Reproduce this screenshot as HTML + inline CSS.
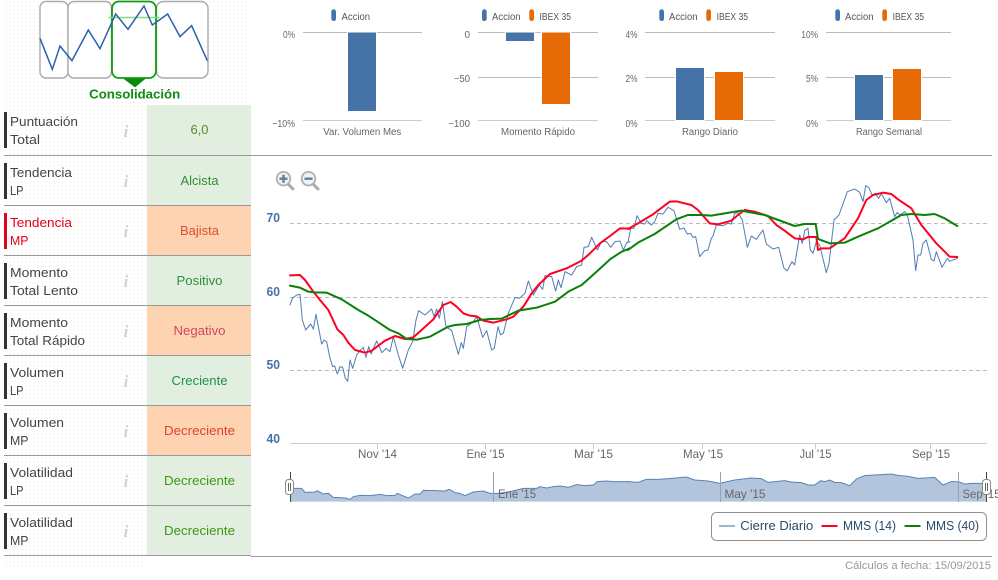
<!DOCTYPE html>
<html lang="es"><head><meta charset="utf-8"><title>Análisis</title>
<style>
html,body{margin:0;padding:0;background:#fff;width:998px;height:580px;overflow:hidden}
svg{display:block}
text{font-family:"Liberation Sans",sans-serif}
.lb{font-size:13px;fill:#444}
.v{font-size:13px;text-anchor:middle}
.i{font-family:"Liberation Serif",serif;font-size:17px;font-weight:bold;font-style:italic;fill:#d2d2d2;text-anchor:middle}
.s{font-size:10px;fill:#555}
.a{font-size:10px;fill:#666;text-anchor:end}
.c{font-size:10px;fill:#666;text-anchor:middle}
.y{font-size:12.5px;font-weight:bold;fill:#4572a7}
.x{font-size:12px;fill:#666;text-anchor:middle}
.n{font-size:12px;fill:#666}
.l{font-size:12.5px;fill:#274b6d}
.g{stroke:#bbb;stroke-width:1}
.ax{stroke:#c0d0e0;stroke-width:1}
.b{fill:#4572a7;stroke:#fff;stroke-width:1}
.o{fill:#e66a05;stroke:#fff;stroke-width:1}
.mb{fill:#4572a7}.mo{fill:#e66a05}
.row{stroke:#999;stroke-width:1}
</style></head><body>
<svg width="998" height="580" viewBox="0 0 998 580" xmlns="http://www.w3.org/2000/svg">
<defs><pattern id="d" width="4" height="4" patternUnits="userSpaceOnUse"><rect x="1" y="1" width="2" height="2" fill="#f9f9f9"/></pattern></defs>
<rect width="998" height="580" fill="#fff"/>
<rect x="4" y="0" width="246" height="105" fill="url(#d)"/>
<rect x="4" y="105" width="143" height="450" fill="url(#d)"/>
<rect x="4" y="557" width="142" height="12" fill="url(#d)"/>

<!-- logo -->
<rect x="40" y="1.5" width="28" height="76.5" rx="6" fill="#fff" stroke="#aaa" stroke-width="1.4"/>
<rect x="68" y="1.5" width="43.5" height="76.5" rx="6" fill="#fff" stroke="#aaa" stroke-width="1.4"/>
<rect x="156.5" y="1.5" width="51.5" height="76.5" rx="7" fill="#fff" stroke="#aaa" stroke-width="1.4"/>
<rect x="112" y="1.5" width="44" height="76.5" rx="7" fill="#fff" stroke="#129a12" stroke-width="1.8"/>
<path d="M108.5 17.5H159.5" stroke="#80dc80" stroke-width="1.6" fill="none"/>
<g transform="scale(.3333)"><path d="M120 115L157 208L180 138L216 182L265 90L300 146L347 42L384 88L432 18L457 75L503 42L540 110L575 77L622 182" fill="none" stroke="#2a62ae" stroke-width="4.5"/>
<path d="M370 236H437L405 262Z" fill="#0a8a0a"/></g>
<text x="134.7" y="98.5" text-anchor="middle" font-size="13" font-weight="bold" fill="#118a11" textLength="91" lengthAdjust="spacingAndGlyphs">Consolidación</text>

<!-- cells -->
<rect x="147" y="105" width="104" height="100.5" fill="#e2efe0"/>
<rect x="147" y="205.5" width="104" height="50" fill="#fdd3b2"/>
<rect x="147" y="255.5" width="104" height="50" fill="#e2efe0"/>
<rect x="147" y="305.5" width="104" height="50" fill="#fdd3b2"/>
<rect x="147" y="355.5" width="104" height="50" fill="#e2efe0"/>
<rect x="147" y="405.5" width="104" height="50" fill="#fdd3b2"/>
<rect x="147" y="455.5" width="104" height="100" fill="#e2efe0"/>

<!-- row lines -->
<path class="row" d="M4 155.5H992M4 205.5H251M4 255.5H251M4 305.5H251M4 355.5H251M4 405.5H251M4 455.5H251M4 505.5H251M4 555.5H251M251 556.5H992" fill="none"/>

<!-- bars -->
<g fill="#333">
<rect x="4" y="112" width="3" height="36"/><rect x="4" y="163" width="3" height="36"/>
<rect x="4" y="213" width="3" height="36" fill="#e2001a"/><rect x="4" y="263" width="3" height="36"/>
<rect x="4" y="313" width="3" height="36"/><rect x="4" y="363" width="3" height="36"/>
<rect x="4" y="413" width="3" height="36"/><rect x="4" y="463" width="3" height="36"/>
<rect x="4" y="513" width="3" height="36"/>
</g>

<text class="lb" x="10" y="126" textLength="68" lengthAdjust="spacingAndGlyphs">Puntuación</text><text class="lb" x="10" y="144" textLength="30" lengthAdjust="spacingAndGlyphs">Total</text>
<text class="lb" x="10" y="177" textLength="62" lengthAdjust="spacingAndGlyphs">Tendencia</text><text class="lb" x="10" y="195" textLength="13.5" lengthAdjust="spacingAndGlyphs">LP</text>
<text class="lb" x="10" y="227" textLength="62" lengthAdjust="spacingAndGlyphs" style="fill:#e2001a">Tendencia</text><text class="lb" x="10" y="245" textLength="18.5" lengthAdjust="spacingAndGlyphs" style="fill:#e2001a">MP</text>
<text class="lb" x="10" y="277" textLength="58" lengthAdjust="spacingAndGlyphs">Momento</text><text class="lb" x="10" y="295" textLength="68" lengthAdjust="spacingAndGlyphs">Total Lento</text>
<text class="lb" x="10" y="327" textLength="58" lengthAdjust="spacingAndGlyphs">Momento</text><text class="lb" x="10" y="345" textLength="75" lengthAdjust="spacingAndGlyphs">Total Rápido</text>
<text class="lb" x="10" y="377" textLength="54" lengthAdjust="spacingAndGlyphs">Volumen</text><text class="lb" x="10" y="395" textLength="13.5" lengthAdjust="spacingAndGlyphs">LP</text>
<text class="lb" x="10" y="427" textLength="54" lengthAdjust="spacingAndGlyphs">Volumen</text><text class="lb" x="10" y="445" textLength="18.5" lengthAdjust="spacingAndGlyphs">MP</text>
<text class="lb" x="10" y="477" textLength="63" lengthAdjust="spacingAndGlyphs">Volatilidad</text><text class="lb" x="10" y="495" textLength="13.5" lengthAdjust="spacingAndGlyphs">LP</text>
<text class="lb" x="10" y="527" textLength="63" lengthAdjust="spacingAndGlyphs">Volatilidad</text><text class="lb" x="10" y="545" textLength="18.5" lengthAdjust="spacingAndGlyphs">MP</text>

<text class="i" x="126" y="137">i</text><text class="i" x="126" y="187">i</text><text class="i" x="126" y="237">i</text>
<text class="i" x="126" y="287">i</text><text class="i" x="126" y="337">i</text><text class="i" x="126" y="387">i</text>
<text class="i" x="126" y="437">i</text><text class="i" x="126" y="487">i</text><text class="i" x="126" y="537">i</text>

<text class="v" x="199.5" y="134" textLength="18" lengthAdjust="spacingAndGlyphs" fill="#5a8a20">6,0</text>
<text class="v" x="199.5" y="185" textLength="38" lengthAdjust="spacingAndGlyphs" fill="#2e8f2e">Alcista</text>
<text class="v" x="199.5" y="235" textLength="39" lengthAdjust="spacingAndGlyphs" fill="#d9512c">Bajista</text>
<text class="v" x="199.5" y="285" textLength="46" lengthAdjust="spacingAndGlyphs" fill="#2f8f3a">Positivo</text>
<text class="v" x="199.5" y="335" textLength="52" lengthAdjust="spacingAndGlyphs" fill="#d0485a">Negativo</text>
<text class="v" x="199.5" y="385" textLength="56" lengthAdjust="spacingAndGlyphs" fill="#1f8f4f">Creciente</text>
<text class="v" x="199.5" y="435" textLength="71" lengthAdjust="spacingAndGlyphs" fill="#e0402b">Decreciente</text>
<text class="v" x="199.5" y="485" textLength="71" lengthAdjust="spacingAndGlyphs" fill="#3a9a10">Decreciente</text>
<text class="v" x="199.5" y="535" textLength="71" lengthAdjust="spacingAndGlyphs" fill="#3a9a10">Decreciente</text>

<!-- bar chart 1 -->
<rect class="mb" x="331.3" y="9.3" width="4.7" height="11.7" rx="2.3"/><text class="s" x="341.5" y="20" textLength="28.5" lengthAdjust="spacingAndGlyphs">Accion</text>
<path class="g" d="M303 32.5H422"/><path class="ax" d="M303 120.5H422"/>
<text class="a" x="295" y="38" textLength="12" lengthAdjust="spacingAndGlyphs">0%</text><text class="a" x="295" y="127" textLength="22.7" lengthAdjust="spacingAndGlyphs">−10%</text>
<rect class="b" x="347.5" y="32" width="29" height="79.5"/>
<text class="c" x="362.3" y="135" textLength="78" lengthAdjust="spacingAndGlyphs">Var. Volumen Mes</text>

<!-- bar chart 2 -->
<rect class="mb" x="482" y="9.3" width="4.7" height="11.7" rx="2.3"/><text class="s" x="492" y="20" textLength="28.5" lengthAdjust="spacingAndGlyphs">Accion</text>
<rect class="mo" x="529.3" y="9.3" width="4.7" height="11.7" rx="2.3"/><text class="s" x="539.5" y="20" textLength="31.5" lengthAdjust="spacingAndGlyphs">IBEX 35</text>
<path class="g" d="M478 32.5H598M478 77.5H598"/><path class="ax" d="M478 120.5H598"/>
<text class="a" x="470" y="38" textLength="5.5" lengthAdjust="spacingAndGlyphs">0</text><text class="a" x="470" y="82" textLength="16" lengthAdjust="spacingAndGlyphs">−50</text><text class="a" x="470" y="127" textLength="21.7" lengthAdjust="spacingAndGlyphs">−100</text>
<rect class="b" x="505.5" y="32" width="29" height="9.5"/><rect class="o" x="541.5" y="32" width="29" height="72.5"/>
<text class="c" x="538" y="135" textLength="74" lengthAdjust="spacingAndGlyphs">Momento Rápido</text>

<!-- bar chart 3 -->
<rect class="mb" x="659.3" y="9.3" width="4.7" height="11.7" rx="2.3"/><text class="s" x="669" y="20" textLength="28.5" lengthAdjust="spacingAndGlyphs">Accion</text>
<rect class="mo" x="706.3" y="9.3" width="4.7" height="11.7" rx="2.3"/><text class="s" x="716.6" y="20" textLength="31.5" lengthAdjust="spacingAndGlyphs">IBEX 35</text>
<path class="g" d="M645 32.5H775M645 77.5H775"/><path class="ax" d="M645 120.5H775"/>
<text class="a" x="637.5" y="38" textLength="12" lengthAdjust="spacingAndGlyphs">4%</text><text class="a" x="637.5" y="82" textLength="12" lengthAdjust="spacingAndGlyphs">2%</text><text class="a" x="637.5" y="127" textLength="12" lengthAdjust="spacingAndGlyphs">0%</text>
<rect class="b" x="675.5" y="67.5" width="29" height="53"/><rect class="o" x="714.5" y="71.5" width="29" height="49"/>
<text class="c" x="710" y="135" textLength="56" lengthAdjust="spacingAndGlyphs">Rango Diario</text>

<!-- bar chart 4 -->
<rect class="mb" x="835.3" y="9.3" width="4.7" height="11.7" rx="2.3"/><text class="s" x="845" y="20" textLength="28.5" lengthAdjust="spacingAndGlyphs">Accion</text>
<rect class="mo" x="882.3" y="9.3" width="4.7" height="11.7" rx="2.3"/><text class="s" x="892.6" y="20" textLength="31.5" lengthAdjust="spacingAndGlyphs">IBEX 35</text>
<path class="g" d="M826 32.5H951M826 77.5H951"/><path class="ax" d="M826 120.5H951"/>
<text class="a" x="818" y="38" textLength="16.7" lengthAdjust="spacingAndGlyphs">10%</text><text class="a" x="818" y="82" textLength="12" lengthAdjust="spacingAndGlyphs">5%</text><text class="a" x="818" y="127" textLength="12" lengthAdjust="spacingAndGlyphs">0%</text>
<rect class="b" x="854.5" y="74.5" width="29" height="46"/><rect class="o" x="892.5" y="68.5" width="29" height="52"/>
<text class="c" x="889" y="135" textLength="66" lengthAdjust="spacingAndGlyphs">Rango Semanal</text>

<!-- zoom icons -->
<g>
<path d="M288 184L293 189" stroke="#aaa" stroke-width="3" stroke-linecap="round"/>
<circle cx="283.5" cy="178.7" r="6.8" fill="#f2f2f2" stroke="#b0b0b0" stroke-width="1.8"/>
<path d="M279.5 178.7H287.5M283.5 174.7V182.7" stroke="#5c7f9f" stroke-width="2.4"/>
<path d="M313 184L318 189" stroke="#aaa" stroke-width="3" stroke-linecap="round"/>
<circle cx="308.5" cy="178.7" r="6.8" fill="#f2f2f2" stroke="#b0b0b0" stroke-width="1.8"/>
<path d="M304.5 178.7H312.5" stroke="#5c7f9f" stroke-width="2.4"/>
</g>

<!-- main chart -->
<path d="M290 223.5H987M290 297.5H987M290 370.5H987" stroke="#bbb" stroke-dasharray="4 3" fill="none"/>
<path class="ax" d="M290 443.5H987M377.5 443V449M485.5 443V449M593.5 443V449M702.5 443V449M815.5 443V449M930.5 443V449" fill="none"/>
<text class="y" x="266.5" y="222" textLength="13.5" lengthAdjust="spacingAndGlyphs">70</text><text class="y" x="266.5" y="296" textLength="13.5" lengthAdjust="spacingAndGlyphs">60</text><text class="y" x="266.5" y="369" textLength="13.5" lengthAdjust="spacingAndGlyphs">50</text><text class="y" x="266.5" y="443" textLength="13.5" lengthAdjust="spacingAndGlyphs">40</text>
<text class="x" x="377.5" y="458" textLength="39" lengthAdjust="spacingAndGlyphs">Nov '14</text><text class="x" x="485.5" y="458" textLength="38" lengthAdjust="spacingAndGlyphs">Ene '15</text><text class="x" x="593.5" y="458" textLength="39" lengthAdjust="spacingAndGlyphs">Mar '15</text><text class="x" x="703" y="458" textLength="40" lengthAdjust="spacingAndGlyphs">May '15</text><text class="x" x="815.5" y="458" textLength="32" lengthAdjust="spacingAndGlyphs">Jul '15</text><text class="x" x="931" y="458" textLength="38" lengthAdjust="spacingAndGlyphs">Sep '15</text>

<g fill="none" stroke-linejoin="round" stroke-linecap="round">
<g transform="translate(260 160) scale(.33333)">
<path stroke="#4f7cb2" stroke-width="3" d="M90 435L97 415L110 405L120 403L127 480L137 510L152 492L160 507L168 463L185 552L192 540L200 545L210 595L218 620L224 618L232 642L240 620L248 622L256 655L263 664L270 600L278 625L290 585L300 572L310 562L318 592L326 560L333 582L350 543L366 578L378 565L390 575L400 530L415 585L428 625L445 570L458 545L468 480L476 452L495 465L515 447L522 470L530 447L538 475L547 425L558 500L575 512L595 583L604 548L610 565L620 500L640 485L650 470L668 532L680 512L695 570L703 565L714 500L722 525L730 520L745 460L765 412L778 415L795 400L805 363L820 405L838 375L848 388L855 347L875 350L887 393L895 360L903 383L915 335L935 345L950 320L965 315L972 262L985 260L995 232L1012 270L1025 245L1040 245L1052 262L1065 245L1080 243L1090 270L1100 248L1110 245"/>
</g>
<g transform="translate(628 160) scale(.33333)">
<path stroke="#4f7cb2" stroke-width="3" d="M0 248L8 205L18 205L27 167L40 190L50 192L57 182L70 195L80 185L90 160L105 162L120 142L138 152L155 208L168 204L178 222L188 220L195 232L203 230L215 290L230 272L240 270L250 235L255 228L265 195L285 197L300 190L310 192L320 160L330 158L343 180L358 262L370 228L385 238L405 210L415 252L435 267L452 262L468 325L478 332L492 305L500 315L515 225L523 250L530 212L540 205L547 270L555 280L565 245L575 255L595 338L603 310L618 180L633 165L658 95L680 87L695 97L705 125L713 77L722 82L732 105L742 100L752 115L760 100L775 128L785 115L800 170L808 157L815 165L830 155L838 165L855 240L863 332L870 285L878 285L885 250L895 240L910 298L918 303L925 275L942 322L958 295L965 304L988 295"/>
</g>
<g transform="translate(260 160) scale(.33333)">
<path stroke="#ff0021" stroke-width="6" d="M90 346L120 345L135 360L160 395L180 420L205 450L232 508L250 525L265 548L285 570L315 578L335 572L375 542L405 528L435 537L460 532L490 505L520 478L550 435L572 426L590 440L610 460L630 467L650 469L670 482L700 488L740 478L760 470L790 440L815 400L835 375L870 342L920 325L965 302L990 280L1020 250L1050 228L1080 205L1110 206"/>
<path stroke="#0a800a" stroke-width="6" d="M90 377L120 383L145 395L165 397L200 398L245 418L295 450L325 467L390 510L415 520L440 537L470 539L510 530L565 500L585 495L620 492L660 480L690 477L725 476L775 452L830 443L885 425L925 395L965 375L1010 335L1050 298L1085 275L1110 265"/>
</g>
<g transform="translate(628 160) scale(.33333)">
<path stroke="#ff0021" stroke-width="6" d="M0 207L30 190L75 163L125 125L145 124L190 135L210 150L245 190L270 193L310 182L330 165L350 150L380 155L420 168L445 195L470 212L500 235L525 238L540 231L565 231L570 270L580 265L605 265L650 235L690 175L715 120L735 105L765 98L790 102L810 118L850 145L880 195L925 250L965 290L988 291"/>
<path stroke="#0a800a" stroke-width="6" d="M0 270L30 248L80 222L145 178L180 165L220 165L250 167L290 160L340 152L410 165L500 198L530 192L563 192L570 237L605 250L650 248L690 230L750 205L820 165L850 162L890 165L920 162L950 175L988 198"/>
</g>
</g>

<!-- navigator -->
<g transform="translate(260 430) scale(.33333)">
<path fill="#b3c5dc" stroke="none" d="M92 215V175H125L135 187L165 186L172 182L190 192L205 190L220 202L240 203L255 204L270 208L280 200L300 196L330 197L360 193L380 197L405 196L412 190L430 198L445 204L465 192L480 192L490 181L530 182L555 183L568 178L585 188L600 190L615 197L640 186L670 183L690 190L715 190L750 185L790 175L830 175L840 170L860 174L880 170L900 168L925 172L950 164L975 167L1000 165L1012 155L1040 153L1060 155L1110 155V215Z"/>
<path fill="none" stroke="#5a82b4" stroke-width="3" d="M92 175H125L135 187L165 186L172 182L190 192L205 190L220 202L240 203L255 204L270 208L280 200L300 196L330 197L360 193L380 197L405 196L412 190L430 198L445 204L465 192L480 192L490 181L530 182L555 183L568 178L585 188L600 190L615 197L640 186L670 183L690 190L715 190L750 185L790 175L830 175L840 170L860 174L880 170L900 168L925 172L950 164L975 167L1000 165L1012 155L1040 153L1060 155L1110 155"/>
</g>
<g transform="translate(628 430) scale(.33333)">
<path fill="#b3c5dc" stroke="none" d="M0 215V155L30 157L55 148L90 148L130 145L175 141L200 150L240 153L275 160L320 150L370 144L400 146L420 157L470 152L490 156L520 158L540 165L560 165L578 152L590 155L605 150L620 157L640 158L665 167L685 147L710 137L770 133L790 132L810 136L840 139L870 145L920 142L945 165L970 155L990 155L1010 162L1030 160L1075 160V215Z"/>
<path fill="none" stroke="#5a82b4" stroke-width="3" d="M0 155L30 157L55 148L90 148L130 145L175 141L200 150L240 153L275 160L320 150L370 144L400 146L420 157L470 152L490 156L520 158L540 165L560 165L578 152L590 155L605 150L620 157L640 158L665 167L685 147L710 137L770 133L790 132L810 136L840 139L870 145L920 142L945 165L970 155L990 155L1010 162L1030 160L1075 160"/>
</g>
<path d="M493.5 472V502M720.5 472V502M958.5 472V502" stroke="#9aa3ad" fill="none"/>
<text class="n" x="498" y="498" textLength="38" lengthAdjust="spacingAndGlyphs">Ene '15</text>
<text class="n" x="724.5" y="498" textLength="41" lengthAdjust="spacingAndGlyphs">May '15</text>
<text class="n" x="962.5" y="498" textLength="38" lengthAdjust="spacingAndGlyphs">Sep '15</text>

<g>
<path d="M290.5 472V502M986.5 472V502" stroke="#444" fill="none"/>
<rect x="285.5" y="479.5" width="8" height="15" rx="3" fill="#fff" stroke="#888"/>
<path d="M288.5 483V491M290.5 483V491" stroke="#666" fill="none"/>
<rect x="982.5" y="479.5" width="8" height="15" rx="3" fill="#fff" stroke="#888"/>
<path d="M985.5 483V491M987.5 483V491" stroke="#666" fill="none"/>
</g>

<!-- legend -->
<rect x="711.5" y="512.5" width="275" height="28" rx="5" fill="#fff" stroke="#909090"/>
<path d="M719 526H735" stroke="#9db6d3" stroke-width="2"/>
<path d="M821.5 526H837.5" stroke="#ff0021" stroke-width="2"/>
<path d="M904.5 526H920.5" stroke="#0a800a" stroke-width="2"/>
<text class="l" x="740.3" y="530" textLength="73" lengthAdjust="spacingAndGlyphs">Cierre Diario</text>
<text class="l" x="843" y="530" textLength="53" lengthAdjust="spacingAndGlyphs">MMS (14)</text>
<text class="l" x="926" y="530" textLength="53" lengthAdjust="spacingAndGlyphs">MMS (40)</text>

<text x="991" y="569" text-anchor="end" font-size="11" fill="#999" textLength="146" lengthAdjust="spacingAndGlyphs">Cálculos a fecha: 15/09/2015</text>
</svg>
</body></html>
